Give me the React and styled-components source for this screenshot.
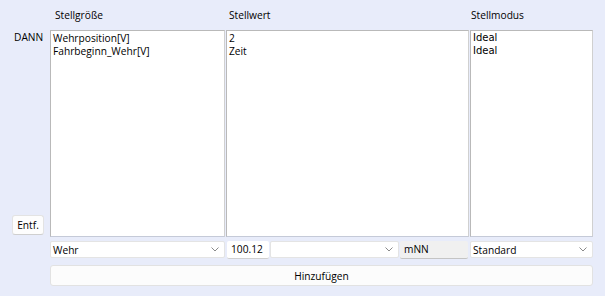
import React from 'react';
import styled, { createGlobalStyle } from 'styled-components';

const GlobalStyle = createGlobalStyle`
    html, body {
        margin: 0;
        padding: 0;
        background: #e8ecfa;
    }
    body {
        font-family: "Open Sans", "Noto Sans", sans-serif;
        font-size: 10.2px;
        color: #000;
    }
`;

const Page = styled.div`
    width: 605px;
    height: 296px;
    background: #e8ecfa;
    box-sizing: border-box;
    display: grid;
    grid-template-columns: 49px 175px 243px 123px;
    grid-template-rows: 30px 207px 22px 27px;
    column-gap: 1px;
    align-content: start;
`;

const Header = styled.div`
    grid-row: 1;
    grid-column: ${(p) => p.$col};
    padding-left: ${(p) => p.$indent || 5}px;
    padding-top: 8px;
    line-height: 14px;
`;

const SideColumn = styled.div`
    grid-row: 2;
    grid-column: 1;
    display: flex;
    flex-direction: column;
    justify-content: space-between;
    align-items: flex-start;
    padding: 0 0 2px 12px;
`;

const Label = styled.span`
    padding-left: 2px;
    line-height: 14px;
`;

const SmallButton = styled.button`
    width: 32px;
    height: 20px;
    padding: 0;
    font-family: inherit;
    font-size: 10.2px;
    background: #fdfdfd;
    border: 1px solid #e3e3e3;
    border-bottom-color: #cfcfcf;
    border-radius: 3px;
    color: #000;
`;

const ListBox = styled.div`
    grid-row: 2;
    grid-column: ${(p) => p.$col};
    background: #fff;
    border: 1px solid #b9b9b9;
    border-right-color: #d0d0d0;
    border-bottom-color: #c5cad8;
    padding: 1px 0 0 2px;
    line-height: 12.5px;
    font-family: ${(p) => (p.$classic ? '"DejaVu Sans", sans-serif' : 'inherit')};
    font-size: ${(p) => (p.$classic ? '10px' : '10.2px')};
`;

const Controls = styled.div`
    grid-row: 3;
    grid-column: 2 / 5;
    padding-top: 4px;
    display: flex;
    align-items: flex-start;
`;

const Combo = styled.div`
    width: ${(p) => p.$w}px;
    margin-right: ${(p) => p.$gap || 0}px;
    box-sizing: border-box;
    height: 17px;
    background: #fff;
    border: 1px solid #e4e4e4;
    border-radius: 2px;
    display: flex;
    align-items: center;
    justify-content: space-between;
    padding: 0 5px 0 2px;
    line-height: 14px;
`;

const Field = styled.div`
    width: ${(p) => p.$w}px;
    margin-right: ${(p) => p.$gap || 0}px;
    box-sizing: border-box;
    height: 18px;
    background: ${(p) => (p.$muted ? '#f0f0f0' : '#fff')};
    border-bottom: 1px solid ${(p) => (p.$muted ? '#c4c4c4' : '#d0d0d0')};
    border-radius: 2px;
    padding: 0 4px;
    line-height: 17px;
`;

const WideButton = styled.button`
    grid-row: 4;
    grid-column: 2 / 5;
    align-self: end;
    margin-bottom: 0;
    height: 21px;
    padding: 0;
    font-family: inherit;
    font-size: 10.2px;
    color: #000;
    background: #fcfcfc;
    border: 1px solid #e2e2e2;
    border-radius: 3px;
`;

function Chevron() {
    return (
        <svg width="8" height="5" viewBox="0 0 8 5">
            <path d="M0.5 0.5 L4 4 L7.5 0.5" fill="none" stroke="#8a8a8a" strokeWidth="1" />
        </svg>
    );
}

export default function App() {
    return (
        <>
            <GlobalStyle />
            <Page>
                <Header $col={2}>Stellgröße</Header>
                <Header $col={3} $indent={3}>Stellwert</Header>
                <Header $col={4} $indent={1}>Stellmodus</Header>

                <SideColumn>
                    <Label>DANN</Label>
                    <SmallButton>Entf.</SmallButton>
                </SideColumn>
                <ListBox $col={2}>
                    Wehrposition[V]
                    <br />
                    Fahrbeginn_Wehr[V]
                </ListBox>
                <ListBox $col={3}>
                    2
                    <br />
                    Zeit
                </ListBox>
                <ListBox $col={4} $classic>
                    Ideal
                    <br />
                    Ideal
                </ListBox>

                <Controls>
                    <Combo $w={175} $gap={2}>
                        <span>Wehr</span>
                        <Chevron />
                    </Combo>
                    <Field $w={42} $gap={1}>100.12</Field>
                    <Combo $w={129} $gap={1}>
                        <span />
                        <Chevron />
                    </Combo>
                    <Field $w={68} $gap={2} $muted>mNN</Field>
                    <Combo $w={123}>
                        <span>Standard</span>
                        <Chevron />
                    </Combo>
                </Controls>

                <WideButton>Hinzufügen</WideButton>
            </Page>
        </>
    );
}
